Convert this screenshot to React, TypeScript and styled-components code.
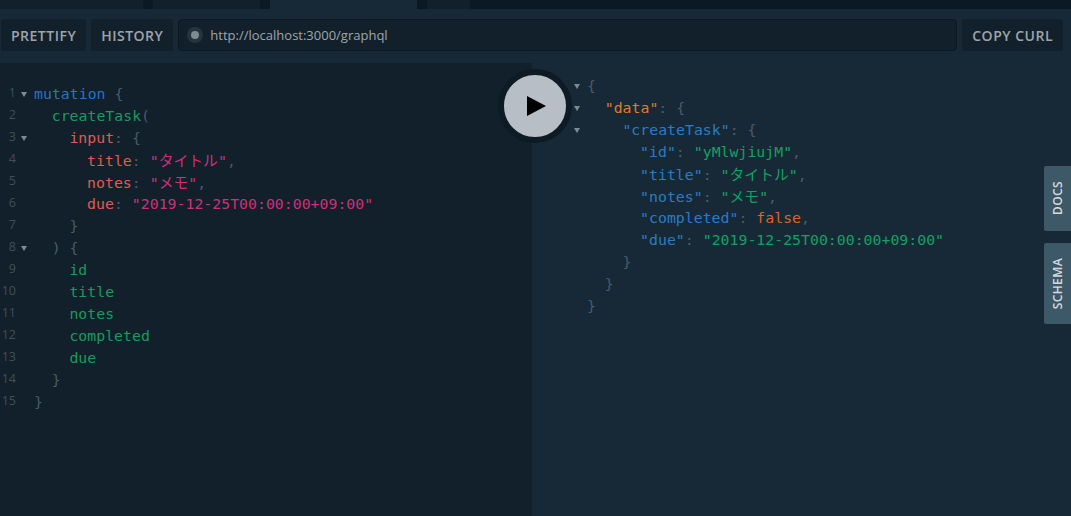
import { createGlobalStyle } from "styled-components";
import styled from "styled-components";

type TokenKind = "keyword" | "def" | "attr" | "string" | "punct" | "property" | "dataKey" | "atom" | "value";

interface IToken {
  kind: TokenKind;
  text: string;
}
interface ILine {
  indent: number;
  fold?: boolean;
  tokens: IToken[];
}

const GlobalStyle = createGlobalStyle`
  html, body {
    margin: 0;
    padding: 0;
    background: #172937;
  }
`;
const tokenColors: Record<TokenKind, string> = {
  keyword: "#2a72c4",
  def: "#1b9a5e",
  attr: "#e25a50",
  string: "#cf2f78",
  punct: "#4b5b67",
  property: "#2a7cc4",
  dataKey: "#e07b28",
  atom: "#d9652a",
  value: "#14a060",
};
const Page = styled.div`
  position: relative;
  width: 1071px;
  height: 516px;
  display: flex;
  flex-direction: column;
  overflow: hidden;
  background: #172937;
`;
const TabBar = styled.div`
  display: flex;
  height: 9px;
  background: #0b1924;
`;
const Tab = styled.div<{ $width: number; $active?: boolean }>`
  width: ${(p) => p.$width}px;
  margin-right: 10px;
  background: ${(p) => (p.$active ? "#172937" : "#11202b")};
`;
const Toolbar = styled.div`
  display: flex;
  align-items: center;
  gap: 5px;
  height: 52px;
  margin-bottom: 2px;
  padding: 0 8px 0 1px;
  box-sizing: border-box;
`;
const ToolButton = styled.div`
  height: 32px;
  padding: 0 10px;
  display: flex;
  align-items: center;
  border-radius: 2px;
  background: #11202b;
  color: rgba(255, 255, 255, 0.6);
  font-family: "Open Sans", sans-serif;
  font-size: 14px;
  font-weight: 600;
  letter-spacing: 0.5px;
`;
const UrlBar = styled.div`
  flex: 1;
  height: 32px;
  display: flex;
  align-items: center;
  gap: 7px;
  padding-left: 8px;
  box-sizing: border-box;
  border: 1px solid #0c1822;
  border-radius: 4px;
  background: #11202b;
  color: rgba(255, 255, 255, 0.6);
  font-family: "Open Sans", sans-serif;
  font-size: 13px;
`;
const StatusDot = styled.div`
  width: 16px;
  height: 16px;
  display: flex;
  align-items: center;
  justify-content: center;
  border-radius: 50%;
  background: #26343e;
  &::after {
    content: "";
    width: 8px;
    height: 8px;
    border-radius: 50%;
    background: #7f8b93;
  }
`;
const Panes = styled.div`
  flex: 1;
  display: flex;
`;
const QueryPane = styled.div`
  width: 532px;
  padding-top: 20px;
  box-sizing: border-box;
  background: #11202b;
`;
const ResultPane = styled.div`
  flex: 1;
  padding: 12px 0 0 37px;
`;
const LineRow = styled.div`
  display: flex;
  align-items: center;
  height: 22px;
`;
const LineNumber = styled.div`
  width: 16px;
  margin-top: -4px;
  text-align: right;
  color: #414f5a;
  font-family: "Open Sans", sans-serif;
  font-size: 12.5px;
`;
const FoldSlot = styled.div`
  width: 18px;
  display: flex;
  justify-content: center;
  padding-right: 2px;
  box-sizing: border-box;
`;
const ResultFoldSlot = styled.div`
  width: 18px;
  display: flex;
  justify-content: flex-start;
  padding-left: 5px;
  box-sizing: border-box;
`;
const FoldArrow = styled.div`
  width: 0;
  height: 0;
  border-left: 3px solid transparent;
  border-right: 3px solid transparent;
  border-top: 5px solid #7f8b93;
`;
const Code = styled.div<{ $indent: number }>`
  padding-left: ${(p) => p.$indent * 8.85}px;
  white-space: pre;
  font-family: "DejaVu Sans Mono", "Noto Sans CJK JP", monospace;
  font-size: 14.8px;
  letter-spacing: 0.03px;
  margin-top: -1px;
`;
const Token = styled.span<{ $kind: TokenKind }>`
  color: ${(p) => tokenColors[p.$kind]};
`;
const PlayButton = styled.div`
  position: absolute;
  left: 498px;
  top: 69px;
  width: 62px;
  height: 62px;
  display: flex;
  align-items: center;
  justify-content: center;
  border: 6px solid #0e1b25;
  border-radius: 50%;
  background: #b7bec6;
  svg {
    margin-left: 2px;
  }
`;
const SideTab = styled.div<{ $top: number; $height: number }>`
  position: absolute;
  right: 0;
  top: ${(p) => p.$top}px;
  width: 27px;
  height: ${(p) => p.$height}px;
  display: flex;
  align-items: center;
  justify-content: center;
  border-radius: 2px 0 0 2px;
  background: #3d5866;
  color: rgba(255, 255, 255, 0.8);
  font-family: "Open Sans", sans-serif;
  font-size: 12px;
  font-weight: 600;
  letter-spacing: 0.4px;
  span {
    writing-mode: vertical-rl;
    transform: rotate(180deg);
  }
`;

const t = (kind: TokenKind, text: string): IToken => ({ kind, text });

const queryLines: ILine[] = [
  { indent: 0, fold: true, tokens: [t("keyword", "mutation"), t("punct", " {")] },
  { indent: 2, tokens: [t("def", "createTask"), t("punct", "(")] },
  { indent: 4, fold: true, tokens: [t("attr", "input"), t("punct", ": {")] },
  { indent: 6, tokens: [t("attr", "title"), t("punct", ": "), t("string", '"タイトル"'), t("punct", ",")] },
  { indent: 6, tokens: [t("attr", "notes"), t("punct", ": "), t("string", '"メモ"'), t("punct", ",")] },
  { indent: 6, tokens: [t("attr", "due"), t("punct", ": "), t("string", '"2019-12-25T00:00:00+09:00"')] },
  { indent: 4, tokens: [t("punct", "}")] },
  { indent: 2, fold: true, tokens: [t("punct", ") {")] },
  { indent: 4, tokens: [t("def", "id")] },
  { indent: 4, tokens: [t("def", "title")] },
  { indent: 4, tokens: [t("def", "notes")] },
  { indent: 4, tokens: [t("def", "completed")] },
  { indent: 4, tokens: [t("def", "due")] },
  { indent: 2, tokens: [t("punct", "}")] },
  { indent: 0, tokens: [t("punct", "}")] },
];

const resultLines: ILine[] = [
  { indent: 0, fold: true, tokens: [t("punct", "{")] },
  { indent: 2, fold: true, tokens: [t("dataKey", '"data"'), t("punct", ": {")] },
  { indent: 4, fold: true, tokens: [t("property", '"createTask"'), t("punct", ": {")] },
  { indent: 6, tokens: [t("property", '"id"'), t("punct", ": "), t("value", '"yMlwjiujM"'), t("punct", ",")] },
  { indent: 6, tokens: [t("property", '"title"'), t("punct", ": "), t("value", '"タイトル"'), t("punct", ",")] },
  { indent: 6, tokens: [t("property", '"notes"'), t("punct", ": "), t("value", '"メモ"'), t("punct", ",")] },
  { indent: 6, tokens: [t("property", '"completed"'), t("punct", ": "), t("atom", "false"), t("punct", ",")] },
  { indent: 6, tokens: [t("property", '"due"'), t("punct", ": "), t("value", '"2019-12-25T00:00:00+09:00"')] },
  { indent: 4, tokens: [t("punct", "}")] },
  { indent: 2, tokens: [t("punct", "}")] },
  { indent: 0, tokens: [t("punct", "}")] },
];

const renderTokens = (line: ILine) =>
  line.tokens.map((token, i) => (
    <Token key={i} $kind={token.kind}>
      {token.text}
    </Token>
  ));

const App = () => {
  return (
    <Page>
      <GlobalStyle />
      <TabBar>
        <Tab $width={143} />
        <Tab $width={107} />
        <Tab $width={147} $active />
        <Tab $width={43} />
      </TabBar>
      <Toolbar>
        <ToolButton>PRETTIFY</ToolButton>
        <ToolButton>HISTORY</ToolButton>
        <UrlBar>
          <StatusDot />
          http://localhost:3000/graphql
        </UrlBar>
        <ToolButton>COPY CURL</ToolButton>
      </Toolbar>
      <Panes>
        <QueryPane>
          {queryLines.map((line, i) => (
            <LineRow key={i}>
              <LineNumber>{i + 1}</LineNumber>
              <FoldSlot>{line.fold && <FoldArrow />}</FoldSlot>
              <Code $indent={line.indent}>{renderTokens(line)}</Code>
            </LineRow>
          ))}
        </QueryPane>
        <ResultPane>
          {resultLines.map((line, i) => (
            <LineRow key={i}>
              <ResultFoldSlot>{line.fold && <FoldArrow />}</ResultFoldSlot>
              <Code $indent={line.indent}>{renderTokens(line)}</Code>
            </LineRow>
          ))}
        </ResultPane>
      </Panes>
      <PlayButton>
        <svg width="19" height="20" viewBox="0 0 19 20">
          <path d="M0 0L19 10L0 20Z" fill="#000" />
        </svg>
      </PlayButton>
      <SideTab $top={166} $height={65}>
        <span>DOCS</span>
      </SideTab>
      <SideTab $top={243} $height={81}>
        <span>SCHEMA</span>
      </SideTab>
    </Page>
  );
};

export default App;
